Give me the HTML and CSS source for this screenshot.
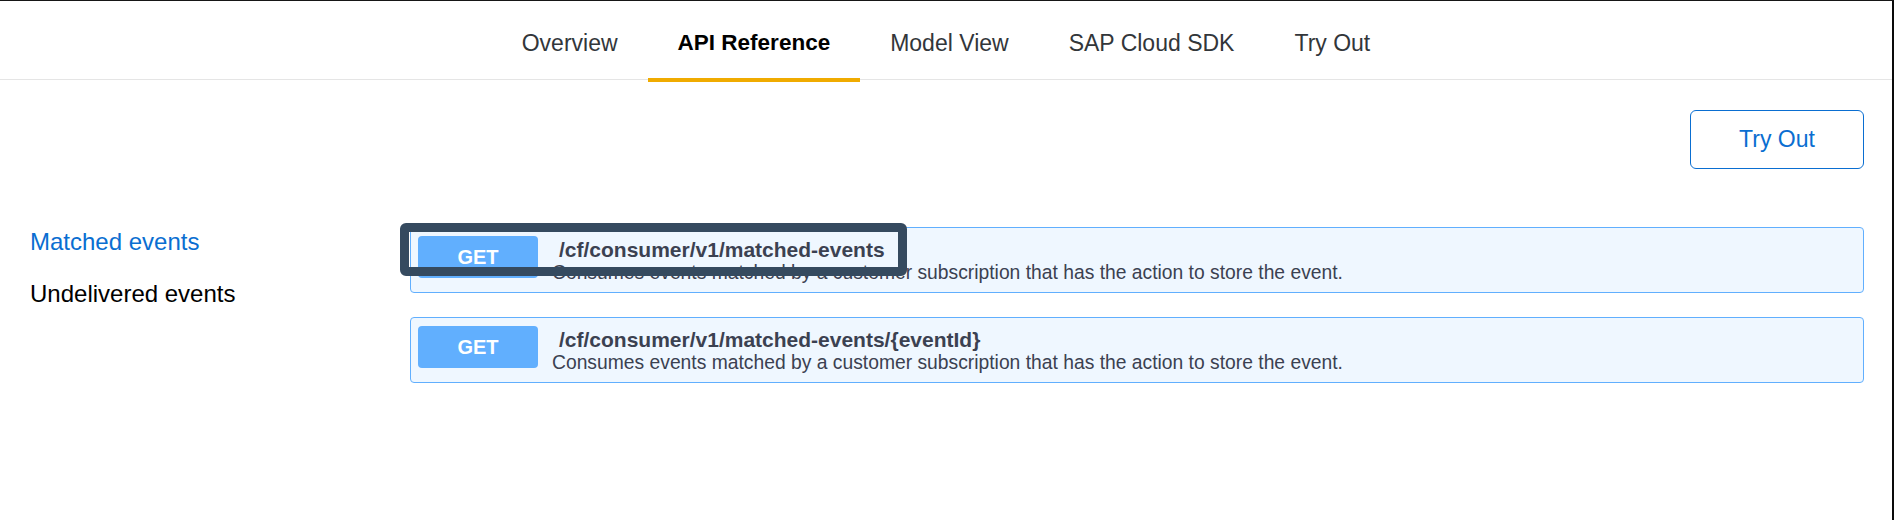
FILE: index.html
```html
<!DOCTYPE html>
<html lang="en">
<head>
<meta charset="utf-8">
<title>API Reference</title>
<link rel="stylesheet" href="styles.css">
</head>
<body>
<div class="page">
  <header class="tabbar">
    <nav class="tabs">
      <a class="tab">Overview</a>
      <a class="tab tab-active">API Reference</a>
      <a class="tab">Model View</a>
      <a class="tab">SAP Cloud SDK</a>
      <a class="tab">Try Out</a>
    </nav>
  </header>
  <main class="main">
    <div class="toolbar">
      <button class="try-btn">Try Out</button>
    </div>
    <div class="content">
      <ul class="side-nav">
        <li class="side-item side-item-active">Matched events</li>
        <li class="side-item">Undelivered events</li>
      </ul>
      <div class="ops">
        <div class="op">
          <span class="method">GET</span>
          <div class="op-text">
            <div class="op-path">/cf/consumer/v1/matched-events</div>
            <div class="op-desc">Consumes events matched by a customer subscription that has the action to store the event.</div>
          </div>
          <div class="focus-ring"></div>
        </div>
        <div class="op">
          <span class="method">GET</span>
          <div class="op-text">
            <div class="op-path">/cf/consumer/v1/matched-events/{eventId}</div>
            <div class="op-desc">Consumes events matched by a customer subscription that has the action to store the event.</div>
          </div>
        </div>
      </div>
    </div>
  </main>
</div>
</body>
</html>
```
FILE: styles.css
```css
html, body {
  margin: 0;
  padding: 0;
  background: #fff;
}
body {
  font-family: "Liberation Sans", Arial, sans-serif;
}
.page {
  width: 1894px;
  height: 520px;
  box-sizing: border-box;
  border-top: 1px solid #161616;
  border-right: 2px solid #0a0a0a;
  overflow: hidden;
}
.tabbar {
  height: 78px;
  border-bottom: 1px solid #e5e5e5;
  display: flex;
  justify-content: center;
}
.tabs {
  display: flex;
  height: 78px;
}
.tab {
  position: relative;
  display: block;
  box-sizing: border-box;
  height: 78px;
  padding: 29px 30px 0;
  font-size: 23px;
  line-height: 26px;
  color: #32363a;
  cursor: pointer;
}
.tab-active {
  font-weight: bold;
  font-size: 22.5px;
  color: #000;
}
.tab-active::after {
  content: "";
  position: absolute;
  left: 0;
  right: 0;
  bottom: -3px;
  height: 4px;
  background: #f0ab00;
}
.main {
  padding: 30px 28px 0 30px;
}
.toolbar {
  display: flex;
  justify-content: flex-end;
}
.try-btn {
  width: 174px;
  height: 59px;
  box-sizing: border-box;
  border: 1px solid #0a6ed1;
  border-radius: 6px;
  background: #fff;
  color: #0a6ed1;
  font-family: "Liberation Sans", Arial, sans-serif;
  font-size: 23px;
  padding: 0;
}
.content {
  display: grid;
  grid-template-columns: 380px 1fr;
  margin-top: 58px;
}
.side-nav {
  list-style: none;
  margin: 0;
  padding: 2px 0 0;
  display: flex;
  flex-direction: column;
  gap: 26px;
}
.side-item {
  font-size: 24px;
  line-height: 26px;
  color: #000;
}
.side-item-active {
  color: #0a6ed1;
}
.ops {
  display: flex;
  flex-direction: column;
  gap: 24px;
}
.op {
  position: relative;
  display: flex;
  align-items: flex-start;
  box-sizing: border-box;
  height: 66px;
  padding: 8px 7px;
  border: 1px solid #61affe;
  border-radius: 4px;
  background: #eff7ff;
}
.method {
  flex: none;
  width: 120px;
  height: 42px;
  border-radius: 4px;
  background: #61affe;
  color: #fff;
  font-weight: bold;
  font-size: 20px;
  display: flex;
  align-items: center;
  justify-content: center;
}
.op-text {
  margin-left: 14px;
  padding-top: 2px;
  color: #3b4151;
}
.op-path {
  font-weight: bold;
  font-size: 21px;
  line-height: 24px;
  padding-left: 7px;
}
.op-desc {
  font-size: 19.3px;
  line-height: 22px;
}
.focus-ring {
  position: absolute;
  left: -11px;
  top: -5px;
  width: 507px;
  height: 53px;
  box-sizing: border-box;
  border: 9px solid #354a5f;
  border-radius: 6px;
}
```
